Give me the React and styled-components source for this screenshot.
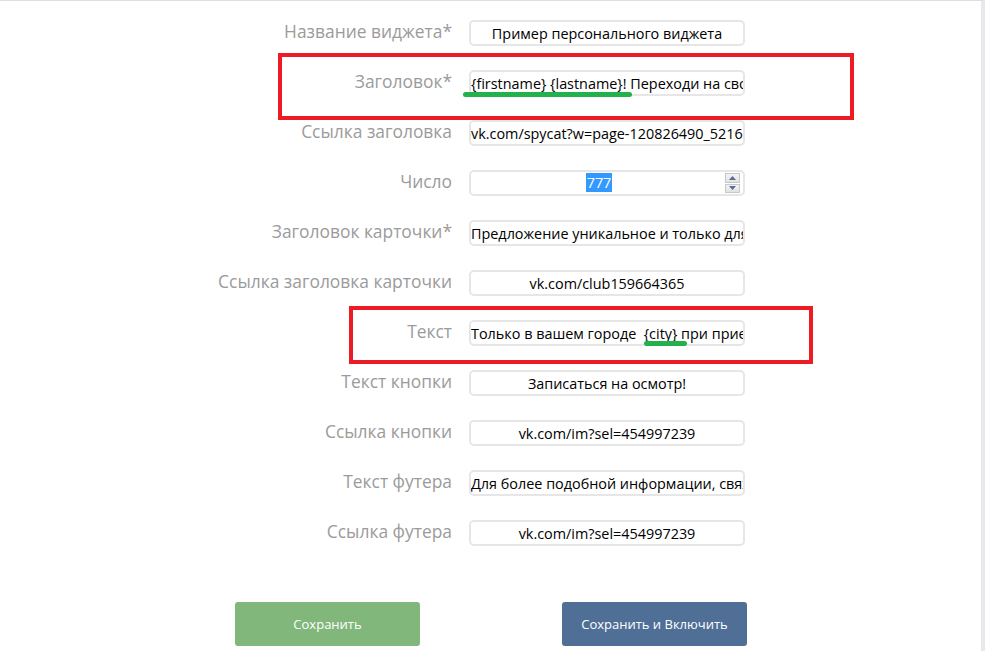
import React from "react";
import styled, { createGlobalStyle } from "styled-components";

const Global = createGlobalStyle`
  html, body { margin: 0; padding: 0; background: #fff; }
  body { font-family: "Open Sans", "Noto Sans", sans-serif; }
`;

const Frame = styled.div`
  position: relative;
  width: 985px;
  height: 651px;
  box-sizing: border-box;
  border-top: 1px solid #dedede;
  border-right: 4px solid #e8e8ed;
  overflow: hidden;
  background: #fff;
`;

const Form = styled.div`
  display: grid;
  grid-template-columns: 452px 276px;
  column-gap: 17px;
  grid-auto-rows: 50px;
  align-items: center;
  padding-top: 7px;
`;

const Label = styled.div`
  text-align: right;
  font-size: 17.4px;
  color: #9b9b9b;
  white-space: nowrap;
  padding-bottom: 5px;
`;

const FieldWrap = styled.div`
  position: relative;
  height: 26px;
`;

const Input = styled.input`
  box-sizing: border-box;
  width: 276px;
  height: 26px;
  border: 2px solid #e6e6e6;
  border-radius: 5px;
  background: #fff;
  padding: 0;
  font-family: "Open Sans", "Noto Sans", sans-serif;
  font-size: 14.4px;
  color: #000;
  text-align: center;
  outline: none;
`;

const NumberBox = styled.div`
  box-sizing: border-box;
  width: 276px;
  height: 26px;
  border: 2px solid #e6e6e6;
  border-radius: 5px;
  background: #fff;
  display: flex;
  align-items: center;
  padding: 0 2px;
  font-size: 14.4px;
`;

const NumberValue = styled.div`
  flex: 1;
  text-align: center;
  line-height: 20px;
`;

const Selected = styled.span`
  background: #3399ff;
  color: #fff;
  padding: 0 1px;
`;

const Spinner = styled.div`
  width: 15px;
  height: 20px;
  display: flex;
  flex-direction: column;
  gap: 1px;
  margin-right: 1px;
`;

const SpinBtn = styled.div`
  flex: 1;
  border: 1px solid #c8c8c8;
  background: linear-gradient(#f4f4f4, #e2e2e2);
  display: flex;
  align-items: center;
  justify-content: center;
`;

const Underline = styled.div`
  position: absolute;
  height: 5px;
  border-radius: 3px;
  background: #22b14c;
`;

const Annotation = styled.div`
  position: absolute;
  border: 4px solid #ed1c24;
  box-sizing: border-box;
  pointer-events: none;
`;

const Buttons = styled.div`
  display: flex;
  gap: 142px;
  padding-left: 235px;
  margin-top: 44px;
`;

const Button = styled.button`
  width: 185px;
  height: 44px;
  border: none;
  border-radius: 3px;
  background: ${(p) => (p.$variant === "primary" ? "#4f6f97" : "#81b77a")};
  color: #fff;
  font-family: "Open Sans", "Noto Sans", sans-serif;
  font-size: 13px;
  cursor: pointer;
`;

const Tri = ({ up }) => (
  <svg width="7" height="4" viewBox="0 0 7 4">
    <path d={up ? "M0 4 L3.5 0 L7 4 Z" : "M0 0 L3.5 4 L7 0 Z"} fill="#5a6a9a" />
  </svg>
);

const rows = [
  { label: "Название виджета*", value: "Пример персонального виджета" },
  { label: "Заголовок*", value: "{firstname} {lastname}! Переходи на свою страницу", underline: { left: -6, top: 22, width: 169 } },
  { label: "Ссылка заголовка", value: "vk.com/spycat?w=page-120826490_52165748" },
  { label: "Число", number: "777" },
  { label: "Заголовок карточки*", value: "Предложение уникальное и только для вас" },
  { label: "Ссылка заголовка карточки", value: "vk.com/club159664365" },
  { label: "Текст", value: "Только в вашем городе  {city} при приеме", underline: { left: 175, top: 21, width: 43 } },
  { label: "Текст кнопки", value: "Записаться на осмотр!" },
  { label: "Ссылка кнопки", value: "vk.com/im?sel=454997239" },
  { label: "Текст футера", value: "Для более подобной информации, свяжитесь" },
  { label: "Ссылка футера", value: "vk.com/im?sel=454997239" },
];

export default function App() {
  return (
    <>
      <Global />
      <Frame>
        <Form>
          {rows.map((r) => (
            <React.Fragment key={r.label}>
              <Label>{r.label}</Label>
              <FieldWrap>
                {r.number ? (
                  <NumberBox>
                    <NumberValue>
                      <Selected>{r.number}</Selected>
                    </NumberValue>
                    <Spinner>
                      <SpinBtn><Tri up /></SpinBtn>
                      <SpinBtn><Tri /></SpinBtn>
                    </Spinner>
                  </NumberBox>
                ) : (
                  <Input readOnly defaultValue={r.value} />
                )}
                {r.underline && (
                  <Underline
                    style={{ left: r.underline.left, top: r.underline.top, width: r.underline.width }}
                  />
                )}
              </FieldWrap>
            </React.Fragment>
          ))}
        </Form>
        <Buttons>
          <Button>Сохранить</Button>
          <Button $variant="primary">Сохранить и Включить</Button>
        </Buttons>
        <Annotation style={{ left: 278, top: 52, width: 576, height: 67 }} />
        <Annotation style={{ left: 349, top: 305, width: 464, height: 58 }} />
      </Frame>
    </>
  );
}
